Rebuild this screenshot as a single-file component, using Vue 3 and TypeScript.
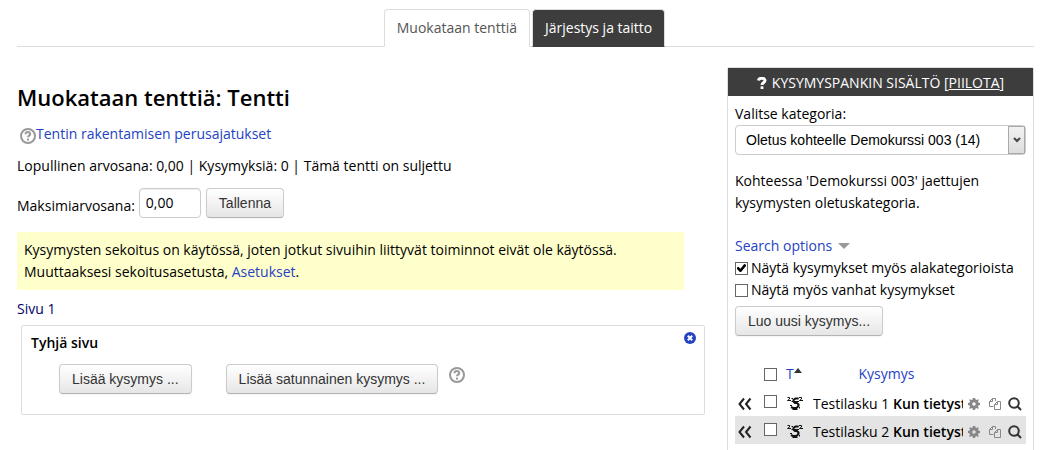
<script setup lang="ts">
import { ref } from 'vue'

interface Question {
  id: number
  name: string
  text: string
  selected: boolean
}

const maxGrade = ref('0,00')
const category = ref('14')
const includeSubcategories = ref(true)
const showOld = ref(false)
const allSelected = ref(false)
const questions = ref<Question[]>([
  { id: 1, name: 'Testilasku 1', text: 'Kun tietyst', selected: false },
  { id: 2, name: 'Testilasku 2', text: 'Kun tietyst', selected: false },
])

function toggleAll(): void {
  questions.value.forEach((q) => (q.selected = allSelected.value))
}
</script>

<template>
  <div class="page">
    <nav class="tabs">
      <a href="#" class="tab active">Muokataan tenttiä</a>
      <a href="#" class="tab">Järjestys ja taitto</a>
    </nav>

    <div class="columns">
      <main class="main">
        <h2 class="title">Muokataan tenttiä: Tentti</h2>
        <p class="basics">
          <svg class="help" viewBox="0 0 16 16" aria-hidden="true">
            <circle cx="8" cy="8" r="7" />
            <path d="M5.5 6.3C5.7 3.3 10.4 3.5 10.2 6.1C10.1 7.6 8 7.6 8 9.3" />
            <rect x="7" y="10.6" width="2" height="2" />
          </svg>
          <a href="#">Tentin rakentamisen perusajatukset</a>
        </p>
        <p class="status">Lopullinen arvosana: 0,00 | Kysymyksiä: 0 | Tämä tentti on suljettu</p>
        <form class="grade" @submit.prevent>
          <label for="max-grade">Maksimiarvosana:</label>
          <input id="max-grade" v-model="maxGrade" class="grade-input" type="text" />
          <button class="btn" type="submit">Tallenna</button>
        </form>
        <div class="notice">
          Kysymysten sekoitus on käytössä, joten jotkut sivuihin liittyvät toiminnot eivät ole käytössä.<br />
          Muuttaaksesi sekoitusasetusta, <a href="#">Asetukset</a>.
        </div>
        <p class="page-label">Sivu 1</p>
        <section class="quiz-page">
          <header class="quiz-head">
            <h3>Tyhjä sivu</h3>
            <button class="icon-btn" type="button" aria-label="Poista">
              <svg class="close" viewBox="0 0 12 12" aria-hidden="true">
                <circle cx="6" cy="6" r="6" />
                <path d="M3.8 3.8L8.2 8.2M8.2 3.8L3.8 8.2" />
              </svg>
            </button>
          </header>
          <div class="quiz-actions">
            <button class="btn" type="button">Lisää kysymys ...</button>
            <div class="random">
              <button class="btn" type="button">Lisää satunnainen kysymys ...</button>
              <button class="icon-btn" type="button" aria-label="Ohje">
                <svg class="help" viewBox="0 0 16 16" aria-hidden="true">
                  <circle cx="8" cy="8" r="7" />
                  <path d="M5.5 6.3C5.7 3.3 10.4 3.5 10.2 6.1C10.1 7.6 8 7.6 8 9.3" />
                  <rect x="7" y="10.6" width="2" height="2" />
                </svg>
              </button>
            </div>
          </div>
        </section>
      </main>

      <aside class="bank">
        <h2 class="bank-title">
          <svg class="question" viewBox="0 0 10 12" aria-hidden="true">
            <path d="M1.4 3.6C2 .3 8.2.6 8 3.7C7.9 5.6 5.1 5.5 5 8" />
            <rect x="3.6" y="9.3" width="2.8" height="2.7" />
          </svg>
          <span>KYSYMYSPANKIN SISÄLTÖ [<a href="#">PIILOTA</a>]</span>
        </h2>
        <div class="bank-body">
          <label for="category">Valitse kategoria:</label>
          <div class="select-wrap">
            <select id="category" v-model="category">
              <option value="14">Oletus kohteelle Demokurssi 003 (14)</option>
            </select>
            <span class="select-arrow">
              <svg viewBox="0 0 8 6" aria-hidden="true"><path d="M1 1L4 4L7 1" /></svg>
            </span>
          </div>
          <p class="info">Kohteessa 'Demokurssi 003' jaettujen kysymysten oletuskategoria.</p>
          <div class="search-options">
            <a href="#">Search options</a>
            <svg class="caret" viewBox="0 0 12 6" aria-hidden="true"><path d="M0 0H12L6 6Z" /></svg>
          </div>
          <label class="check">
            <input v-model="includeSubcategories" type="checkbox" />
            Näytä kysymykset myös alakategorioista
          </label>
          <label class="check">
            <input v-model="showOld" type="checkbox" />
            Näytä myös vanhat kysymykset
          </label>
          <button class="btn create" type="button">Luo uusi kysymys...</button>

          <table class="questions">
            <colgroup>
              <col class="c-add" />
              <col class="c-check" />
              <col class="c-type" />
              <col />
              <col class="c-act" />
              <col class="c-act" />
              <col class="c-act" />
            </colgroup>
            <thead>
              <tr>
                <th></th>
                <th><input v-model="allSelected" type="checkbox" aria-label="Valitse kaikki" @change="toggleAll" /></th>
                <th>
                  <a href="#" class="sort">T<svg viewBox="0 0 8 5" aria-hidden="true"><path d="M0 5L4 0L8 5Z" /></svg></a>
                </th>
                <th><a href="#">Kysymys</a></th>
                <th colspan="3"></th>
              </tr>
            </thead>
            <tbody>
              <tr v-for="q in questions" :key="q.id">
                <td>
                  <a href="#" aria-label="Lisää tenttiin">
                    <svg class="add" viewBox="0 0 14 14" aria-hidden="true">
                      <path d="M6 1.5L1.5 7L6 12.5M12.5 1.5L8 7L12.5 12.5" />
                    </svg>
                  </a>
                </td>
                <td class="pick"><input v-model="q.selected" type="checkbox" :aria-label="q.name" /></td>
                <td>
                  <svg class="type" viewBox="0 0 16 16" aria-hidden="true">
                    <path class="thin" d="M.5 1.5H2.5V3L.5 4.500H4M12 1.5H14.500V3L12.500 4.500H16M4.500 2.500H6M9 2.500H11.500" />
                    <path class="thick" d="M11.500 2.500H8.500L6.500 4V5.500L8 7H10L11.500 8.500V10.500" />
                    <path class="thick" d="M11.500 10L9.500 12H6L4 11" />
                    <path class="thin" d="M3 9.500H5M5.500 13.500H10.500M4.500 5.500H12M12.500 11V12.500" />
                  </svg>
                </td>
                <td class="name"><div>{{ q.name }} <b>{{ q.text }}</b></div></td>
                <td>
                  <a href="#" aria-label="Muokkaa">
                    <svg class="gear" viewBox="0 0 12 12" aria-hidden="true">
                      <path
                        fill-rule="evenodd"
                        d="M4.800 0H7.200L7.500 1.600L8.700 2.100L10 1.200L10.900 2.100L10 3.500L10.400 4.600L12 4.900V7.100L10.400 7.400L9.900 8.600L10.800 10L10 10.900L8.600 10L7.400 10.400L7.100 12H4.900L4.600 10.400L3.400 9.900L2 10.900L1.100 10L2 8.600L1.600 7.400L0 7.100V4.900L1.600 4.600L2.100 3.400L1.200 2L2 1.200L3.400 2.100L4.600 1.600ZM6 4.300A1.700 1.700 0 1 0 6 7.700A1.700 1.700 0 1 0 6 4.300Z"
                      />
                    </svg>
                  </a>
                </td>
                <td>
                  <a href="#" aria-label="Kopioi">
                    <svg class="copy" viewBox="0 0 12 12" aria-hidden="true">
                      <path d="M4.500 8.500H.5V3.500L3.500.5H6.500V3M.5 3.500H3.500V.5" />
                      <path d="M5.500 11.500V6.500L8.500 3.500H11.500V11.500ZM5.500 6.500H8.500V3.500" />
                    </svg>
                  </a>
                </td>
                <td>
                  <a href="#" aria-label="Esikatsele">
                    <svg class="zoom" viewBox="0 0 14 14" aria-hidden="true">
                      <circle cx="6" cy="6" r="4.800" />
                      <path d="M9.300 9.300L13 13" />
                    </svg>
                  </a>
                </td>
              </tr>
            </tbody>
          </table>
        </div>
      </aside>
    </div>
  </div>
</template>

<style>
body {
  margin: 0;
  background: #fff;
}
</style>

<style scoped>
.page {
  box-sizing: border-box;
  min-height: 100vh;
  display: flex;
  flex-direction: column;
  padding: 9px 7px 0 17px;
  font: 14px/22px "Open Sans", "Noto Sans", sans-serif;
  color: #000;
}
.page * {
  box-sizing: border-box;
}
p,
h2,
h3 {
  margin: 0;
}
a {
  color: #2442c4;
  text-decoration: none;
}
svg {
  display: block;
  flex: none;
}

.tabs {
  display: flex;
  justify-content: center;
  gap: 2px;
  padding-right: 2px;
  border-bottom: 1px solid #ddd;
}
.tab {
  height: 38px;
  margin-bottom: -1px;
  padding: 7px 12px;
  border: 1px solid #ddd;
  border-bottom-color: #3d3d3d;
  border-radius: 4px 4px 0 0;
  background: #3d3d3d;
  color: #fff;
}
.tab.active {
  background: #fff;
  border-bottom-color: #fff;
  color: #555;
}

.columns {
  flex: 1;
  display: flex;
  gap: 22px;
  padding-top: 20px;
}
.main {
  flex: 1;
  min-width: 0;
  padding-top: 10px;
}
.title {
  font-size: 22px;
  line-height: 40px;
  font-weight: 600;
}
.basics {
  display: flex;
  align-items: center;
  padding: 6px 0 0 3px;
}
.basics .help {
  margin-top: 3px;
}
.help {
  width: 16px;
  height: 16px;
  fill: none;
  stroke: #999;
  stroke-width: 2;
}
.help rect {
  fill: #999;
  stroke: none;
}
.status {
  margin-top: 10px;
}
.grade {
  display: flex;
  align-items: center;
  gap: 5px;
  margin-top: 11px;
}
.grade label {
  padding-top: 6px;
  margin-right: -1px;
}
.grade-input {
  width: 62px;
  height: 30px;
  padding: 3px 6px 5px;
  border: 1px solid #ccc;
  border-radius: 4px;
  box-shadow: inset 0 1px 1px rgba(0, 0, 0, 0.075);
  font: inherit;
  color: #000;
}
.btn {
  height: 30px;
  padding: 4px 12px;
  border: 1px solid #ccc;
  border-bottom-color: #b3b3b3;
  border-radius: 4px;
  background: linear-gradient(#fff, #e6e6e6);
  box-shadow: 0 1px 2px rgba(0, 0, 0, 0.05);
  font: 14px/20px "Liberation Sans", Arial, sans-serif;
  color: #333;
  white-space: nowrap;
}
.notice {
  margin: 14px 21px 0 0;
  padding: 7px;
  background: #ffc;
}
.page-label {
  margin-top: 8px;
  color: #006;
}
.quiz-page {
  height: 90px;
  margin: 5px 0 0 4px;
  padding: 6px 8px 0 9px;
  border: 1px solid #ddd;
  border-radius: 2px;
}
.quiz-head {
  display: flex;
  justify-content: space-between;
  align-items: flex-start;
}
h3 {
  font-size: 14px;
  font-weight: 600;
}
b {
  font-weight: 600;
}
.icon-btn {
  padding: 0;
  border: 0;
  background: none;
}
.close {
  width: 12px;
  height: 12px;
  fill: #2442c4;
}
.close path {
  stroke: #fff;
  stroke-width: 2;
}
.quiz-actions {
  display: flex;
  gap: 34px;
  padding: 10px 0 0 28px;
}
.random {
  display: flex;
  gap: 11px;
  align-items: flex-start;
}
.random .icon-btn {
  padding-top: 3px;
}

.bank {
  flex: none;
  width: 307px;
  border: 1px solid #ddd;
  border-bottom: 0;
  border-radius: 3px 3px 0 0;
}
.bank-title {
  display: flex;
  justify-content: center;
  align-items: center;
  gap: 5px;
  height: 28px;
  padding-top: 2px;
  background: #3d3d3d;
  color: #fff;
  font-size: 14px;
  font-weight: 400;
}
.bank-title a {
  color: #fff;
  text-decoration: underline;
}
.question {
  width: 10px;
  height: 12px;
  fill: none;
  stroke: #fff;
  stroke-width: 3;
}
.question rect {
  fill: #fff;
  stroke: none;
}
.bank-body {
  padding: 7px;
}
.bank-body > label {
  display: block;
}
.select-wrap {
  position: relative;
}
select {
  appearance: none;
  display: block;
  width: 100%;
  height: 30px;
  padding: 4px 24px 4px 10px;
  border: 1px solid #ccc;
  border-radius: 4px;
  background: #fff;
  color: #000;
  font: 14px/20px "Liberation Sans", Arial, sans-serif;
}
.select-arrow {
  position: absolute;
  top: 1px;
  right: 1px;
  bottom: 1px;
  width: 17px;
  display: grid;
  place-items: center;
  border: 1px solid #aaa;
  background: linear-gradient(#f2f2f2, #ddd);
  pointer-events: none;
}
.select-arrow svg {
  width: 8px;
  height: 6px;
  fill: none;
  stroke: #444;
  stroke-width: 2;
}
.info {
  margin-top: 15px;
}
.search-options {
  display: flex;
  align-items: center;
  gap: 6px;
  margin-top: 21px;
}
.caret {
  width: 12px;
  height: 6px;
  fill: #999;
}
.bank-body > .check {
  display: flex;
  align-items: center;
  gap: 3px;
}
input[type="checkbox"] {
  appearance: none;
  display: block;
  flex: none;
  position: relative;
  width: 13px;
  height: 13px;
  margin: 0;
  border: 1px solid #666;
  background: #fff;
}
input[type="checkbox"]:checked::after {
  content: "";
  position: absolute;
  inset: 1px;
  background: #000;
  clip-path: polygon(0 45%, 15% 35%, 38% 58%, 80% 5%, 100% 15%, 100% 28%, 45% 95%, 32% 95%, 0 62%);
}
.create {
  margin-top: 5px;
}
.questions {
  width: 100%;
  margin-top: 24px;
  border-collapse: collapse;
  table-layout: fixed;
}
.c-add {
  width: 29px;
}
.c-check {
  width: 22px;
}
.c-type {
  width: 27px;
}
.c-act {
  width: 20px;
}
th,
td {
  height: 28px;
  padding: 0;
  font-weight: 400;
  text-align: left;
  vertical-align: middle;
}
th:nth-child(4) {
  padding-right: 6px;
  text-align: center;
}
td {
  padding-top: 3px;
}
.sort {
  display: flex;
  width: 20px;
}
.sort svg {
  width: 8px;
  height: 5px;
  margin-top: 5px;
  fill: #333;
}
tbody tr:nth-child(even) {
  background: #e4e4e4;
}
td.pick {
  padding: 0 0 2px;
}
.name div {
  margin-right: 3px;
  overflow: hidden;
  white-space: nowrap;
}
.add {
  width: 14px;
  height: 14px;
  margin-left: 3px;
  fill: none;
  stroke: #222;
  stroke-width: 2;
}
.type {
  width: 16px;
  height: 16px;
  margin-left: 1px;
  fill: none;
  stroke: #111;
}
.thick {
  stroke-width: 2;
}
.gear {
  width: 12px;
  height: 12px;
  margin-left: 2px;
  fill: #888;
}
.copy {
  width: 12px;
  height: 12px;
  margin-left: 3px;
  fill: none;
  stroke: #888;
}
.zoom {
  width: 14px;
  height: 14px;
  margin-left: 2px;
  fill: none;
  stroke: #333;
  stroke-width: 2;
}
</style>
